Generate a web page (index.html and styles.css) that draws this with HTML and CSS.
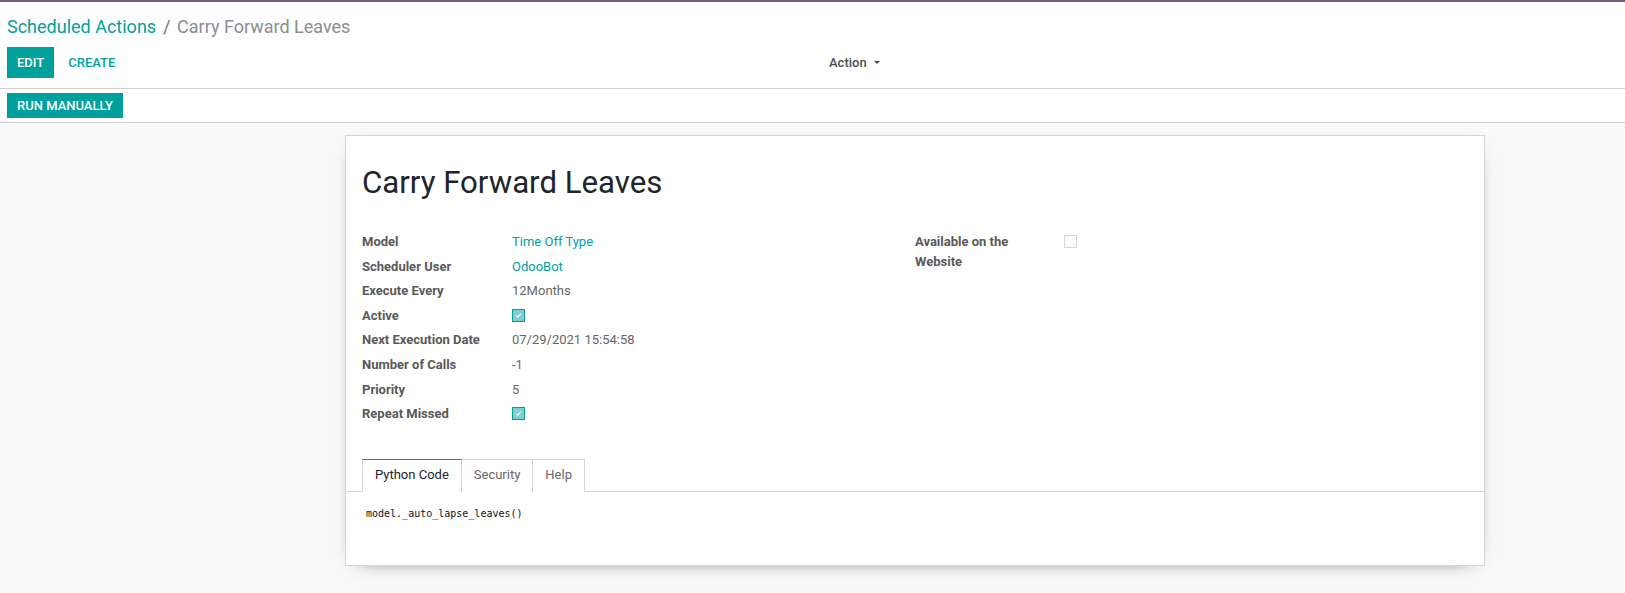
FILE: index.html
```html
<!DOCTYPE html>
<html>
<head>
<meta charset="utf-8">
<link rel="stylesheet" href="styles.css">
</head>
<body>
<div class="topline"></div>
<div class="cp">
  <div class="breadcrumb">
    <a class="bc-link">Scheduled Actions</a><span class="bc-sep">/</span><span class="bc-current">Carry Forward Leaves</span>
  </div>
  <div class="cp-bottom">
    <div class="cp-left">
      <button class="btn btn-primary">EDIT</button>
      <button class="btn btn-link">CREATE</button>
    </div>
    <div class="cp-right">
      <button class="btn btn-action">Action <span class="caret"></span></button>
    </div>
  </div>
</div>
<div class="statusbar">
  <button class="btn btn-primary btn-sm">RUN MANUALLY</button>
</div>
<div class="content">
  <div class="sheet">
    <h1 class="title">Carry Forward Leaves</h1>
    <div class="groups">
      <div class="group">
        <div class="row"><div class="label">Model</div><div class="value link">Time Off Type</div></div>
        <div class="row"><div class="label">Scheduler User</div><div class="value link">OdooBot</div></div>
        <div class="row"><div class="label">Execute Every</div><div class="value">12Months</div></div>
        <div class="row"><div class="label">Active</div><div class="value"><span class="cb checked"><svg viewBox="0 0 13 13" width="11" height="11"><path d="M3.8 6.6 L5.6 8.3 L9.2 4.6" fill="none" stroke="#fff" stroke-width="1.2"/></svg></span></div></div>
        <div class="row"><div class="label">Next Execution Date</div><div class="value">07/29/2021 15:54:58</div></div>
        <div class="row"><div class="label">Number of Calls</div><div class="value">-1</div></div>
        <div class="row"><div class="label">Priority</div><div class="value">5</div></div>
        <div class="row"><div class="label">Repeat Missed</div><div class="value"><span class="cb checked"><svg viewBox="0 0 13 13" width="11" height="11"><path d="M3.8 6.6 L5.6 8.3 L9.2 4.6" fill="none" stroke="#fff" stroke-width="1.2"/></svg></span></div></div>
      </div>
      <div class="group">
        <div class="row"><div class="label">Available on the Website</div><div class="value top"><span class="cb"></span></div></div>
      </div>
    </div>
    <ul class="tabs">
      <li class="tab active">Python Code</li>
      <li class="tab">Security</li>
      <li class="tab">Help</li>
    </ul>
    <div class="code">model._auto_lapse_leaves()</div>
  </div>
</div>
</body>
</html>
```

FILE: styles.css
```css
* { box-sizing: border-box; }
html, body { margin: 0; padding: 0; }
body {
  font-family: Roboto, "Noto Sans", sans-serif;
  font-size: 13px;
  color: #666666;
  background: #f9f9f9;
  height: 593px;
  overflow: hidden;
}
.topline { height: 2px; background: #7c5a75; }
.cp { background: #fff; padding: 11px 7px 0 7px; border-bottom: 1px solid #cfcfcf; height: 87px; }
.breadcrumb { font-size: 18px; line-height: 27px; height: 27px; white-space: nowrap; }
.bc-link { color: #00a09d; }
.bc-sep { color: #6c757d; padding: 0 6.5px 0 7px; }
.bc-current { color: #8a8d91; }
.cp-bottom { display: flex; margin-top: 7px; height: 31px; }
.cp-left { width: 50%; display: flex; gap: 2px; }
.cp-right { width: 50%; display: flex; padding-left: 6px; }
.btn {
  font-family: Roboto, sans-serif;
  font-size: 13px;
  font-weight: 500;
  line-height: 19.5px;
  border: 1px solid transparent;
  padding: 4.75px 9px;
  background: transparent;
  cursor: pointer;
  border-radius: 0;
  height: 31px;
}
.btn-primary { background: #00a09d; color: #fff; border-color: #00a09d; }
.btn-link { color: #00a09d; padding: 4.75px 11px 4.75px 11px; }
.btn-action { color: #4c4c4c; display: flex; align-items: center; padding: 4.75px 9.5px; }
.caret {
  display: inline-block;
  width: 0; height: 0;
  border-left: 3px solid transparent;
  border-right: 3px solid transparent;
  border-top: 3px solid #4c4c4c;
  margin-left: 7px;
}
.statusbar { background: #fff; border-bottom: 1px solid #cfcfcf; padding: 4px 7px 3px; height: 34px; display: flex; align-items: flex-start; }
.btn-sm { height: 25px; padding: 2px 9px; line-height: 19px; }
.content { padding: 12px 0 0 345px; }
.sheet {
  width: 1140px;
  background: #fff;
  border: 1px solid #d2d5d9;
  box-shadow: 0 5px 20px -15px #000;
  padding: 29px 16px 0;
  height: 431px;
}
.title {
  margin: 0;
  font-size: 31.2px;
  line-height: 36px;
  font-weight: 400;
  color: #212529;
}
.groups { display: flex; margin-top: 31px; }
.group { width: 553px; }
.row { display: flex; line-height: 19.6px; padding-bottom: 5px; }
.label { width: 150px; padding-right: 16px; font-weight: 700; color: #595959; }
.group + .group .label { width: 149px; }
.value { color: #666666; display: flex; align-items: center; min-height: 19.6px; }
.value.top { align-items: flex-start; }
.link { color: #00a09d; }
.cb {
  display: inline-flex;
  width: 13px; height: 13px;
  border: 1px solid #d6d6d6;
  background: #fafafa;
  align-items: center; justify-content: center;
}
.value.top .cb { margin-top: 3px; }
.cb.checked { border-color: #00a09d; background: #7fcfcc; }
.cb svg { display: block; }
.tabs {
  list-style: none;
  margin: 30px -16px 0;
  padding: 0 0 0 16px;
  display: flex;
  border-bottom: 1px solid #ced4da;
  height: 33px;
}
.tab {
  padding: 0 12px;
  line-height: 30px;
  height: 33px;
  border: 1px solid #ced4da;
  border-bottom: none;
  color: #666;
  background: #fff;
  margin-left: -1px;
}
.tab:first-child { margin-left: 0; }
.tab.active { color: #212529; border-top-color: #875a7b; position: relative; z-index: 1; }
.code {
  font-family: "DejaVu Sans Mono", monospace;
  font-size: 10px;
  line-height: 16px;
  color: #111;
  padding: 14px 0 0 4px;
}
```
